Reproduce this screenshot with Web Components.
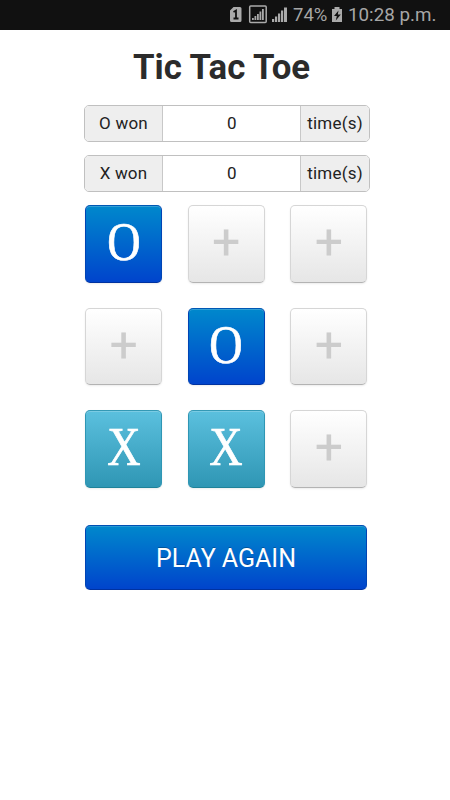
<!DOCTYPE html>
<html lang="en">
<head>
<meta charset="utf-8">
<title>Tic Tac Toe</title>
<style>
  body {
    margin: 0;
    background: #fff;
    font-family: Roboto, sans-serif;
  }
</style>
</head>
<body>
<tic-tac-toe></tic-tac-toe>

<script>
class StatusBar extends HTMLElement {
  constructor() {
    super();
    this.attachShadow({ mode: 'open' }).innerHTML = `
      <style>
        :host {
          display: flex;
          align-items: center;
          height: 30px;
          box-sizing: border-box;
          padding-left: 229px;
          background: #111;
          color: #a6a6a6;
          font-size: 19px;
          line-height: 31px;
          white-space: nowrap;
        }
        svg { display: block; flex: none; }
        .percent { width: 37px; font-size: 18.5px; }
        .time { margin-left: 4px; font-size: 18.8px; }
      </style>
      <svg width="64" height="30" fill="#aaa">
        <path d="M4.500 7H11a1.500 1.500 0 0 1 1.500 1.500v12A1.500 1.500 0 0 1 11 22H2.500A1.500 1.500 0 0 1 1 20.500V10.500z"/>
        <path d="M4.500 12L7 10.500V18M4.500 18.500h5" fill="none" stroke="#111" stroke-width="1.800"/>
        <rect x="20.700" y="6" width="16.500" height="16.500" rx="1" fill="none" stroke="#aaa" stroke-width="1.500"/>
        <path d="M23 18h1.800v2H23zM25.500 16h1.800v4h-1.800zM28 14h1.800v6H28zM30.500 11.500h1.800V20h-1.800zM33 9h1.800v11H33z"/>
        <path d="M43 19h2.200v3H43zM46 16.500h2.200V22H46zM49 13.500h2.200V22H49zM52 10.500h2.200V22H52zM55 7.500h3V22h-3z"/>
      </svg>
      <span class="percent">74%</span>
      <svg width="14" height="30" viewBox="0 0 14 30">
        <path d="M4.500 7h5v2H12v13H2V9h2.500z" fill="#aaa"/>
        <path d="M8.500 10.500L4 16h2.800l-1 4.500 5-6H7.800z" fill="#111"/>
      </svg>
      <span class="time">10:28 p.m.</span>
    `;
  }
}
customElements.define('status-bar', StatusBar);

class ScoreRow extends HTMLElement {
  constructor() {
    super();
    this.attachShadow({ mode: 'open' }).innerHTML = `
      <style>
        :host {
          display: grid;
          grid-template-columns: 77px 1fr 69px;
          width: 286px;
          height: 37px;
          box-sizing: border-box;
          border: 1px solid #c0c0c0;
          border-radius: 5px;
          overflow: hidden;
          color: #222;
          font-size: 17px;
          letter-spacing: 0.2px;
          line-height: 34px;
          text-align: center;
        }
        .addon { background: #eee; }
        .value {
          border-left: 1px solid #c8c8c8;
          padding-left: 1px;
        }
        .unit { border-left: 1px solid #c8c8c8; }
      </style>
      <span class="addon"><slot></slot></span>
      <span class="value">0</span>
      <span class="addon unit">time(s)</span>
    `;
  }
}
customElements.define('score-row', ScoreRow);

class BoardTile extends HTMLElement {
  constructor() {
    super();
    this.attachShadow({ mode: 'open' }).innerHTML = `
      <style>
        :host {
          display: flex;
          justify-content: center;
          box-sizing: border-box;
          height: 77.5px;
          border: 1px solid #d6d6d6;
          border-bottom-color: #b3b3b3;
          border-radius: 5px;
          background: linear-gradient(#fff, #e6e6e6);
          box-shadow: inset 0 1px 0 rgba(255,255,255,.2), 0 1px 2px rgba(0,0,0,.08);
          color: #ccc;
          font-size: 50px;
          line-height: 73px;
        }
        :host([mark]) {
          color: #fff;
          font-family: "Liberation Serif", serif;
          font-size: 55px;
          line-height: 71px;
          -webkit-text-stroke: 0.7px #fff;
        }
        :host([mark="o"]) {
          border-color: #0058b4 #0044b4 #0032a0;
          background: linear-gradient(#0088cc, #0044cc);
        }
        :host([mark="x"]) {
          border-color: #3499b5 #2f96b4 #1f8299;
          background: linear-gradient(#5bc0de, #2f96b4);
        }
        :host([mark]) span { transform: scaleX(.84); }
      </style>
      <span><slot>+</slot></span>
    `;
  }
}
customElements.define('board-tile', BoardTile);

class PlayButton extends HTMLElement {
  constructor() {
    super();
    this.attachShadow({ mode: 'open' }).innerHTML = `
      <style>
        :host {
          display: block;
          box-sizing: border-box;
          width: 282px;
          height: 65px;
          border: 1px solid;
          border-color: #0050b4 #0044b4 #0032a0;
          border-radius: 5px;
          background: linear-gradient(#0088cc, #0044cc);
          box-shadow: inset 0 1px 0 rgba(255,255,255,.15), 0 1px 1px rgba(0,0,0,.05);
          color: #fff;
          font-size: 25px;
          line-height: 65px;
          text-align: center;
          text-shadow: 0 -1px 0 rgba(0,0,0,.25);
        }
      </style>
      <slot></slot>
    `;
  }
}
customElements.define('play-button', PlayButton);

class TicTacToe extends HTMLElement {
  constructor() {
    super();
    this.attachShadow({ mode: 'open' }).innerHTML = `
      <style>
        :host { display: block; }
        main { width: 286px; margin-left: 84px; }
        h1 {
          margin: 0 0 0 -5px;
          padding-top: 15px;
          height: 60px;
          color: #2b2b2b;
          font-size: 34.8px;
          font-weight: 700;
          line-height: 44px;
          text-align: center;
          width: 285px;
        }
        .scores { display: grid; gap: 13px; }
        .board {
          display: grid;
          grid-template-columns: repeat(3, 77.3px);
          gap: 25px 25.3px;
          margin: 13px 0 37px 1px;
        }
        play-button { margin-left: 1px; }
      </style>
      <status-bar></status-bar>
      <main>
        <h1>Tic Tac Toe</h1>
        <div class="scores">
          <score-row>O won</score-row>
          <score-row>X won</score-row>
        </div>
        <div class="board">
          <board-tile mark="o">O</board-tile>
          <board-tile></board-tile>
          <board-tile></board-tile>
          <board-tile></board-tile>
          <board-tile mark="o">O</board-tile>
          <board-tile></board-tile>
          <board-tile mark="x">X</board-tile>
          <board-tile mark="x">X</board-tile>
          <board-tile></board-tile>
        </div>
        <play-button>PLAY AGAIN</play-button>
      </main>
    `;
  }
}
customElements.define('tic-tac-toe', TicTacToe);
</script>
</body>
</html>
